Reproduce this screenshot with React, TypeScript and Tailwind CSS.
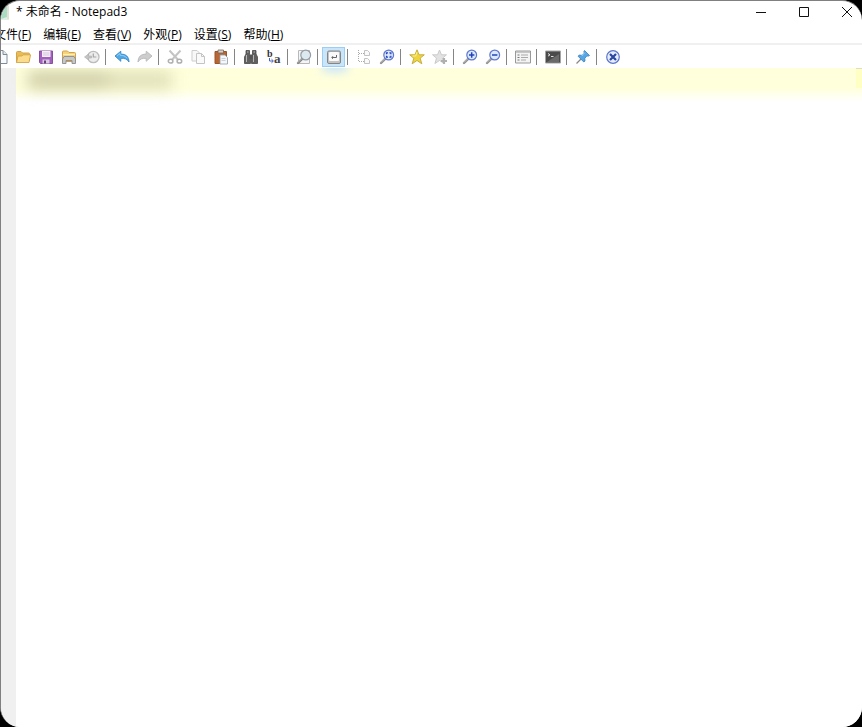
import type { ReactNode } from 'react'

interface ToolProps {
  label: string
  active?: boolean
  disabled?: boolean
  children: ReactNode
}

interface MenuEntry {
  text: string
  hotkey: string
}

const menus: MenuEntry[] = [
  { text: '文件', hotkey: 'F' },
  { text: '编辑', hotkey: 'E' },
  { text: '查看', hotkey: 'V' },
  { text: '外观', hotkey: 'P' },
  { text: '设置', hotkey: 'S' },
  { text: '帮助', hotkey: 'H' },
]

function Tool({ label, active = false, disabled = false, children }: ToolProps) {
  return (
    <button
      type="button"
      aria-label={label}
      disabled={disabled}
      className={
        active
          ? 'flex h-5 w-[23px] shrink-0 items-center justify-center border border-[#9ccdf3] bg-[#c9e5fa]'
          : 'flex h-5 w-[23px] shrink-0 items-center justify-center'
      }
    >
      <svg viewBox="0 0 16 16" className="h-4 w-4 shrink-0" fill="none">
        {children}
      </svg>
    </button>
  )
}

function Separator() {
  return (
    <div className="flex h-4 w-[7px] shrink-0 pl-[2px]">
      <div className="w-px bg-[#858585]" />
    </div>
  )
}

// Round lens with a handle going to the lower left
function Lens({ handle = '#8f8f8f', ring = '#5f78cc', fill = '#dbe8ff' }) {
  return (
    <>
      <path d="M6.4 9.6 2 14" stroke={handle} strokeWidth="2.4" strokeLinecap="round" />
      <path d="M6 9.4 1.8 13.6" stroke="#d0d0d0" strokeWidth="0.8" />
      <circle cx="9.7" cy="6" r="4.9" fill={fill} stroke={ring} strokeWidth="1.2" />
    </>
  )
}

function Toolbar() {
  return (
    <div role="toolbar" aria-label="Toolbar" className="flex h-[23px] shrink-0 items-center overflow-hidden bg-white">
      <div className="-ml-[13px] flex items-center">
        <Tool label="New">
          <path d="M3 1.5h8l4 4v9H3z" fill="#f8fbfd" stroke="#7f8b98" />
          <path d="M11 1.5v4h4" fill="#dfe8ef" stroke="#7f8b98" />
        </Tool>
        <Tool label="Open">
          <path d="M1.5 13.5V3.5q0-1 1-1H6L7.5 4h6q1 0 1 1v7" fill="#e9bd55" stroke="#d3a248" />
          <path d="M1.5 13.5 3 7h4l1-1.2h7.6L14 13.5z" fill="#fbdb8c" stroke="#d5a544" strokeWidth="0.9" />
        </Tool>
        <Tool label="Save">
          <path d="M1.5 2h13v12.5h-12l-1-1z" fill="#a35fbd" stroke="#85529b" />
          <path d="M4 2h8.5v6H4z" fill="#f5eef8" />
          <path d="M5 4h6.5M5 6h6.5" stroke="#c8b4d2" strokeWidth="0.7" />
          <path d="M4.5 10.5h7v4h-7z" fill="#d9cce0" />
          <path d="M6 11.5h2v3H6z" fill="#67427a" />
        </Tool>
        <Tool label="Browse">
          <path d="M1.5 12.5V3q0-1 1-1h4L8 3.5h5.5q1 0 1 1v8z" fill="#f5d27c" stroke="#d3a248" />
          <path d="M2 5.5h12" stroke="#fff0bd" />
          <path d="M1.5 14.5V10L3 7.5h10l1.5 2.5v4.5H11v-3H5v3z" fill="#c7c7c5" stroke="#8c8c8c" strokeWidth="0.9" />
        </Tool>
        <Tool label="History" disabled>
          <circle cx="9.3" cy="8" r="5.7" fill="#ececec" stroke="#bcbcbc" strokeWidth="1.3" />
          <path d="M9.3 4.5V8h3" stroke="#a5a5a5" strokeWidth="1.2" />
          <path d="m.5 8 4-3v2h3v2h-3v2z" fill="#c4c4c4" stroke="#adadad" strokeWidth="0.6" />
        </Tool>
        <Separator />
        <Tool label="Undo">
          <path d="M1 7 6.8 2.2v2.9c5 0 8 2.2 8.2 7.9-2-3-4-3.9-8.2-3.7v3z" fill="#51aae6" stroke="#3a88c6" strokeWidth="0.9" />
          <path d="m3 6.8 3-2.3v1.7c3 0 5.5.8 7 3" stroke="#9fd5f7" strokeWidth="0.8" />
        </Tool>
        <Tool label="Redo" disabled>
          <path d="M15 7 9.2 2.2v2.9C4.2 5.1 1.2 7.3 1 13c2-3 4-3.9 8.2-3.7v3z" fill="#cdcdcd" stroke="#b8b8b8" strokeWidth="0.9" />
        </Tool>
        <Separator />
        <Tool label="Cut" disabled>
          <path d="M2.5 1.5 11 10.7M13.5 1.5 5 10.7" stroke="#c4c4c4" strokeWidth="2" />
          <ellipse cx="3.6" cy="12.2" rx="2.3" ry="1.9" stroke="#b0b0b0" strokeWidth="1.5" />
          <ellipse cx="12.4" cy="12.2" rx="2.3" ry="1.9" stroke="#b0b0b0" strokeWidth="1.5" />
        </Tool>
        <Tool label="Copy" disabled>
          <path d="M2 1.5h5L9.5 4v8H2z" fill="#f8f8f8" stroke="#cdcdcd" />
          <path d="M6.5 4.5h5l3 3v7h-8z" fill="#fafafa" stroke="#c4c4c4" />
          <path d="M11.5 4.5v3h3" stroke="#c4c4c4" />
        </Tool>
        <Tool label="Paste">
          <path d="M2 2.5h11.5v12H2z" fill="#b86632" stroke="#9c5527" />
          <path d="M5 1h5.5v3H5z" fill="#d8d0c9" stroke="#77665b" strokeWidth="0.8" />
          <path d="M7 6h5l2.5 2.5V15H7z" fill="#f5f8fb" stroke="#919ba5" strokeWidth="0.8" />
          <path d="M8.5 9.5h4M8.5 11.5h4" stroke="#b4bdc7" strokeWidth="0.7" />
        </Tool>
        <Separator />
        <Tool label="Find">
          <path d="M3 1.5h3.5V5l1 1v8.5h-6V8L3 5zM13 1.5H9.5V5l-1 1v8.5h6V8L13 5z" fill="#606060" stroke="#484848" strokeWidth="0.8" />
          <path d="M6.5 6h3v4h-3z" fill="#555" />
          <path d="M3.5 6v7M10.5 6v7M4 3h1.5M10.5 3H12" stroke="#b5b5b5" />
        </Tool>
        <Tool label="Replace">
          <text x="1" y="8" fontSize="10" fontWeight="700" fontFamily="Liberation Serif, serif" fill="#333">b</text>
          <text x="8" y="14" fontSize="13" fontWeight="700" fontFamily="Liberation Serif, serif" fill="#444">a</text>
          <path d="M3.5 9v3H7M5.5 10.2 7.4 12l-1.9 1.8" stroke="#4863c4" />
        </Tool>
        <Separator />
        <Tool label="Print preview">
          <path d="M2.5 1.5h11v13h-11z" fill="#f5f5f5" stroke="#b8b8b8" />
          <Lens handle="#858585" ring="#949da5" fill="#dce9ef" />
        </Tool>
        <Separator />
        <Tool label="Word wrap" active>
          <rect x="1.5" y="2" width="13" height="12.5" rx="1.5" fill="#c4c4c4" stroke="#858585" />
          <rect x="3" y="3" width="10" height="9" rx="1" fill="#fafafa" />
          <path d="M10.5 6v2.5H6M7 7.2 5.7 8.5 7 9.8" stroke="#666" />
        </Tool>
        <Separator />
        <Tool label="Folding" disabled>
          <path d="M2.5 1v12M3 4.5h5M3 12.5h5" stroke="#aaa" strokeDasharray="1 1" />
          <path d="M8.5 1.5h3l2 2v3h-5zM8.5 9.5h3l2 2v3h-5z" fill="#fafafa" stroke="#c3c3c3" />
        </Tool>
        <Tool label="Focused view">
          <Lens />
          <path d="M7.5 5.3V3.8H9M10.4 3.8h1.5v1.5M11.9 6.7v1.5h-1.5M9 8.2H7.5V6.7" stroke="#2443ba" strokeWidth="1.2" />
        </Tool>
        <Separator />
        <Tool label="Favorites">
          <path d="m8 .8 2.1 5h5.2l-4.1 3.4 1.6 5.6L8 11.5l-4.8 3.3 1.6-5.6L.7 5.8h5.2z" fill="#ecd53e" stroke="#c2a736" strokeWidth="0.9" />
          <path d="M8 3 6.7 7H3.5" stroke="#fff28e" />
        </Tool>
        <Tool label="Add to favorites" disabled>
          <path d="m7.5 1 2 4.8h5l-4 3.3 1.6 5.4-4.6-3-4.6 3 1.6-5.4-4-3.3h5z" fill="#e2e2e2" stroke="#c6c6c6" strokeWidth="0.9" />
          <path d="M12 9v6M9 12h6" stroke="#b0b0b0" strokeWidth="2.2" />
        </Tool>
        <Separator />
        <Tool label="Zoom in">
          <Lens />
          <path d="M7 6h5.4M9.7 3.3v5.4" stroke="#2443ba" strokeWidth="1.5" />
        </Tool>
        <Tool label="Zoom out">
          <Lens />
          <path d="M7 6h5.4" stroke="#2443ba" strokeWidth="1.5" />
        </Tool>
        <Separator />
        <Tool label="Scheme">
          <path d="M.5 2h15v12H.5z" fill="#f3f3f3" stroke="#999" />
          <path d="M1 3h14" stroke="#b9b9b9" strokeWidth="1.5" />
          <path d="M2.5 6h2M2.5 8.5h2M2.5 11h2" stroke="#777" />
          <path d="M6 6h7M6 8.5h7M6 11h5" stroke="#a9a9a9" />
        </Tool>
        <Separator />
        <Tool label="Launch console">
          <path d="M.5 2h15v12H.5z" fill="#4a4a4a" stroke="#a5a5a5" />
          <path d="m3 4.5 2 1.3-2 1.3M6 7.5h2.5" stroke="#eee" strokeWidth="0.9" />
          <path d="M2 13 14 5v8z" fill="#6a6a6a" />
        </Tool>
        <Separator />
        <Tool label="Always on top">
          <path d="M6 10 1.5 14.5" stroke="#888" strokeWidth="1.3" />
          <path d="m9.5 1.5 5 5-1.5.7-1-.4-2.2 2.5.2 2.7-1.2 1L3 7.2l1.3-1.1 2.7.2L9.3 4l-.5-1.2z" fill="#55a8e5" stroke="#3a7fbe" strokeWidth="0.8" />
          <path d="m9.7 3.7-3 3.3" stroke="#a9dafb" />
        </Tool>
        <Separator />
        <Tool label="Exit">
          <circle cx="8" cy="8" r="6.3" fill="#e6edff" stroke="#5b76c9" strokeWidth="1.2" />
          <path d="m5 5 6 6M11 5l-6 6" stroke="#2a479f" strokeWidth="2.2" />
        </Tool>
      </div>
    </div>
  )
}

function TitleBar() {
  return (
    <header className="flex h-[22px] shrink-0 items-center justify-between overflow-hidden">
      <div className="flex items-center gap-[7px]">
        <svg viewBox="0 0 8 16" className="h-4 w-2">
          <path d="M0 4 6 0h2v16H0z" fill="#dff0e5" />
          <path d="M0 7 6 2v11l-6 2z" fill="#a9dcc0" />
          <path d="M7 2v13" stroke="#e7cfc4" />
        </svg>
        <h1 className="text-xs whitespace-nowrap">* 未命名 - Notepad3</h1>
      </div>
      <div className="-mr-[6px] flex">
        <button type="button" aria-label="Minimize" className="flex w-[43px] justify-center">
          <svg viewBox="0 0 10 10" className="h-[10px] w-[10px]">
            <path d="M0 5.5h10" stroke="#111" />
          </svg>
        </button>
        <button type="button" aria-label="Maximize" className="flex w-[43px] justify-center">
          <svg viewBox="0 0 10 10" className="h-[10px] w-[10px]">
            <path d="M.5.5h9v9h-9z" fill="none" stroke="#111" />
          </svg>
        </button>
        <button type="button" aria-label="Close" className="flex w-[43px] justify-center">
          <svg viewBox="0 0 10 10" className="h-[10px] w-[10px]">
            <path d="m0 0 10 10M10 0 0 10" stroke="#111" />
          </svg>
        </button>
      </div>
    </header>
  )
}

function Editor() {
  return (
    <main className="relative flex flex-1 overflow-hidden">
      <div className="w-[15px] shrink-0 bg-[#f0f0f0]" />
      <textarea aria-label="Document" spellCheck={false} className="flex-1 resize-none bg-white outline-none" />
      {/* Current line highlight, softened together with its text */}
      <div className="pointer-events-none absolute inset-x-0 top-0 h-10 overflow-hidden pl-[15px]">
        <div className="h-full bg-linear-to-b from-[#ffffdc] from-50% to-white to-85%">
          <div className="flex pt-1 pl-3 blur-[8px]">
            <div className="h-4 w-20 bg-[#c9c8a2]" />
            <div className="h-4 w-16 bg-[#dcdcb4]" />
          </div>
        </div>
        <div className="absolute top-0 right-0 h-5 w-[6px] border-t border-[#ddddc8] bg-[#ffffc4]" />
        <div className="absolute -top-2 left-[322px] h-3 w-6 bg-[#c9e5fa] blur-[5px]" />
      </div>
    </main>
  )
}

export default function App() {
  return (
    <div className="flex h-screen flex-col bg-black font-['Open_Sans','Noto_Sans_CJK_SC',sans-serif] text-black">
      <div className="flex flex-1 flex-col overflow-hidden rounded-[20px] border-t border-l border-[#808080] bg-white">
        <TitleBar />
        <nav className="-ml-[7px] flex h-5 shrink-0 items-center gap-3 pt-1">
          {menus.map((menu) => (
            <button key={menu.hotkey} type="button" className="text-xs whitespace-nowrap">
              {menu.text}(<u>{menu.hotkey}</u>)
            </button>
          ))}
        </nav>
        <div className="h-[2px] shrink-0 bg-[#f0f0f0]" />
        <Toolbar />
        <Editor />
      </div>
    </div>
  )
}
